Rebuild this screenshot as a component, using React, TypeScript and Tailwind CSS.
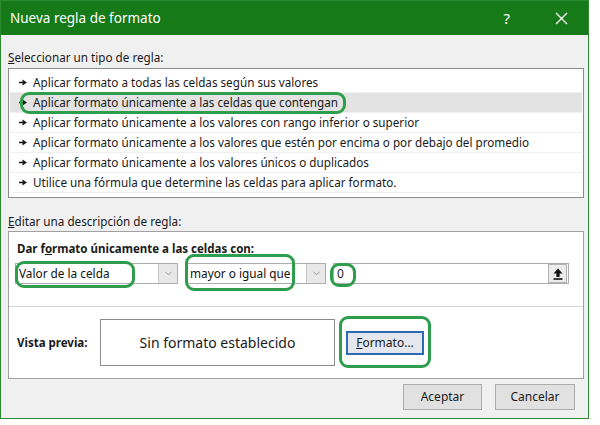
import { ChevronDown } from "lucide-react";

const reglas = [
  "Aplicar formato a todas las celdas según sus valores",
  "Aplicar formato únicamente a las celdas que contengan",
  "Aplicar formato únicamente a los valores con rango inferior o superior",
  "Aplicar formato únicamente a los valores que estén por encima o por debajo del promedio",
  "Aplicar formato únicamente a los valores únicos o duplicados",
  "Utilice una fórmula que determine las celdas para aplicar formato.",
];

const Marca = ({ className }: { className: string }) => (
  <span
    className={`pointer-events-none absolute rounded-[9px] border-[3px] border-[#2f9e4c] ${className}`}
  />
);

const Flecha = () => (
  <svg width="8" height="7" viewBox="0 0 8 7" className="shrink-0">
    <path d="M0 2.8h3.5V0.5L8 3.5 3.5 6.5V4.2H0z" fill="#1a1a1a" />
  </svg>
);

const Desplegable = ({ texto, width }: { texto: string; width: string }) => (
  <div className={`flex h-[21px] ${width} items-center border border-[#abadb3] bg-white`}>
    <span className="flex-1 truncate pl-[3px] text-[11.8px] text-[#111]">{texto}</span>
    <span className="flex h-[19px] w-[19px] items-center justify-center border-l border-[#c6c6c6] bg-[#e8e8e8]">
      <ChevronDown size={11} strokeWidth={1.5} className="text-[#777]" />
    </span>
  </div>
);

export default function App() {
  return (
    <div
      className="relative h-[425px] w-[600px] bg-white text-[#1a1a1a]"
      style={{ fontFamily: '"Noto Sans", "Open Sans", sans-serif' }}
    >
      <div className="flex h-[419px] w-[589px] flex-col border border-[#2c8a30] bg-[#f0f0f0]">
        {/* Barra de título */}
        <div className="flex h-[34px] shrink-0 items-center bg-[#157a17] pl-[9px] text-white">
          <span className="text-[13.5px]">Nueva regla de formato</span>
          <span className="ml-auto mr-[45px] text-[15px]">?</span>
          <svg width="13" height="13" viewBox="0 0 13 13" className="mr-[20px]">
            <path d="M1 1L12 12M12 1L1 12" stroke="white" strokeWidth="1.3" />
          </svg>
        </div>

        <div className="flex flex-1 flex-col px-[7px]">
          {/* Tipo de regla */}
          <p className="mt-[14px] h-[16px] text-[11.7px] leading-[16px]">
            <span className="underline">S</span>eleccionar un tipo de regla:
          </p>
          <div className="mt-[3px] h-[130px] w-[576px] border border-[#8c8c8c] bg-white px-[1px] py-[4px]">
            {reglas.map((r, i) => (
              <div
                key={r}
                className={`relative flex h-[20px] items-center gap-[6px] border-b border-[#f0f0f0] pl-[9px] text-[11.7px] ${
                  i === 1 ? "bg-[#e3e3e3]" : ""
                }`}
              >
                <Flecha />
                <span className="whitespace-nowrap">{r}</span>
                {i === 1 && <Marca className="left-[10px] top-[-1px] h-[22px] w-[326px]" />}
              </div>
            ))}
          </div>

          {/* Descripción */}
          <p className="mt-[15px] h-[16px] text-[11.7px] leading-[16px]">
            <span className="underline">E</span>ditar una descripción de regla:
          </p>
          <div className="mt-[2px] flex h-[148px] w-[576px] flex-col border border-[#a0a0a0] bg-white">
            <div className="h-[75px] border-b border-[#d4d4d4]">
              <p className="mt-[9px] pl-[8px] text-[11.5px] font-bold leading-[16px]">
                Dar f<span className="underline">o</span>rmato únicamente a las celdas con:
              </p>
              <div className="mt-[6px] flex items-center pl-[6px]">
                <div className="relative">
                  <Desplegable texto="Valor de la celda" width="w-[163px]" />
                  <Marca className="left-[0px] top-[-2px] h-[27px] w-[120px]" />
                </div>
                <div className="relative ml-[8px]">
                  <Desplegable texto="mayor o igual que" width="w-[140px]" />
                  <Marca className="left-[-1px] top-[-9px] h-[37px] w-[110px]" />
                </div>
                <div className="relative ml-[7px] flex h-[21px] w-[236px] items-center border border-[#abadb3] bg-white">
                  <span className="flex-1 pl-[3px] text-[12px]">0</span>
                  <span className="mr-[1px] flex h-[19px] w-[19px] items-center justify-center border border-[#b4b4b4] bg-[#ececec]">
                    <svg width="10" height="12" viewBox="0 0 10 12">
                      <path d="M5 0.5L9.5 5.5H6.6V9H3.4V5.5H0.5z" fill="#111" />
                      <rect x="0.5" y="10.2" width="9" height="1.6" fill="#111" />
                    </svg>
                  </span>
                  <Marca className="left-[-4px] top-[-1px] h-[24px] w-[26px]" />
                </div>
              </div>
            </div>
            <div className="flex flex-1 items-center">
              <span className="ml-[8px] w-[83px] text-[11.5px] font-bold">Vista previa:</span>
              <div className="flex h-[47px] w-[235px] items-center justify-center border border-[#8c8c8c] text-[14px]">
                Sin formato establecido
              </div>
              <div className="relative ml-[11px]">
                <button className="flex h-[24px] w-[78px] items-center justify-center border-2 border-[#2a6bb5] bg-[#e4e8ee] text-[12px]">
                  <span className="underline">F</span>ormato...
                </button>
                <Marca className="left-[-7px] top-[-15px] h-[52px] w-[92px]" />
              </div>
            </div>
          </div>

          {/* Botones */}
          <div className="mt-[5px] flex justify-end gap-[13px] pr-[6px]">
            <button className="h-[26px] w-[79px] border border-[#adadad] bg-[#e1e1e1] text-[12px]">
              Aceptar
            </button>
            <button className="h-[26px] w-[80px] border border-[#adadad] bg-[#e1e1e1] text-[12px]">
              Cancelar
            </button>
          </div>
        </div>
      </div>
    </div>
  );
}
